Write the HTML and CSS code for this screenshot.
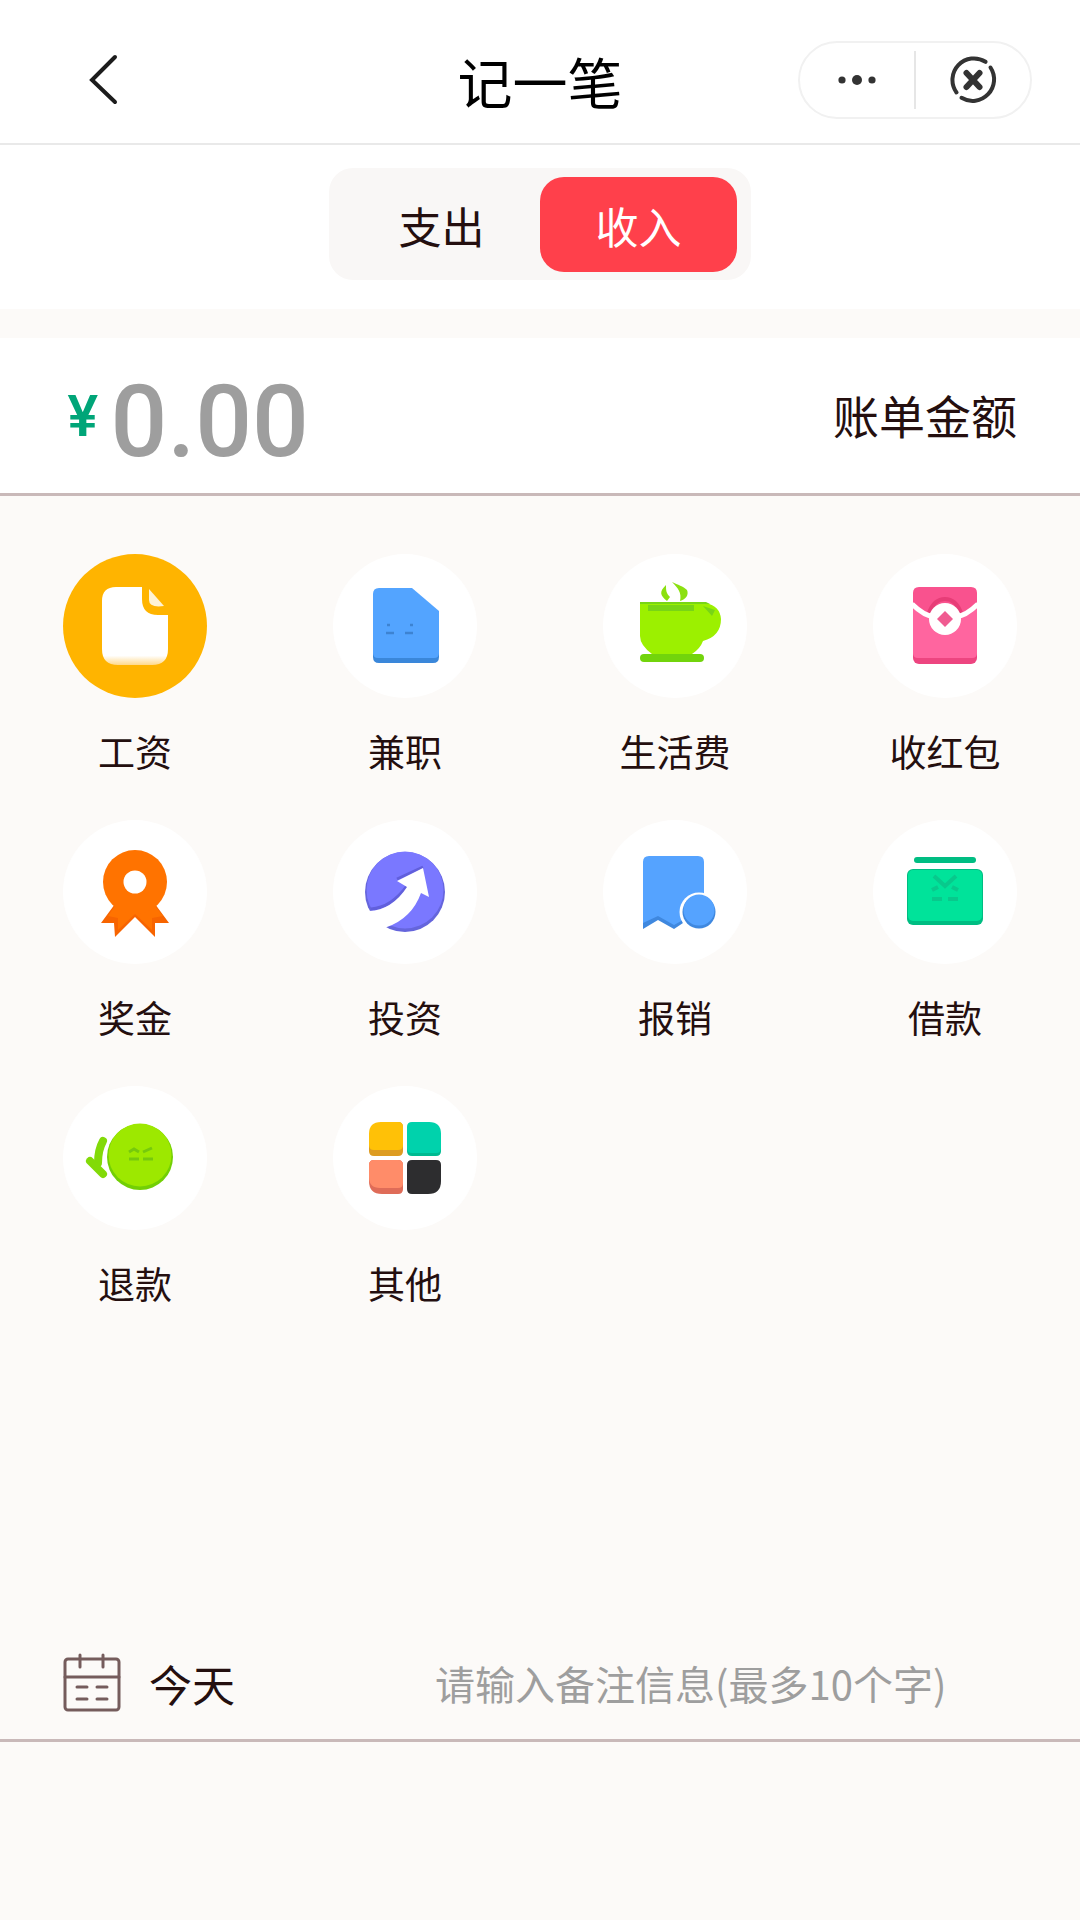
FILE: index.html
```html
<!DOCTYPE html>
<html lang="zh-CN">
<head>
<meta charset="utf-8">
<meta name="viewport" content="width=device-width, initial-scale=1">
<title>记一笔</title>
<link rel="stylesheet" href="styles.css">
</head>
<body>
<div class="page">
  <header class="navbar">
    <div class="navbar-side">
      <button class="icon-button" type="button" aria-label="返回">
        <svg width="40" height="56" viewBox="0 0 40 56" fill="none" stroke="#1c1c1c" stroke-width="4"><path d="M32 7 9 30l23 22" stroke-linecap="round"/></svg>
      </button>
    </div>
    <h1 class="navbar-title">记一笔</h1>
    <div class="navbar-side navbar-side-end">
      <div class="capsule">
        <button class="capsule-button" type="button" aria-label="更多">
          <svg width="48" height="48" viewBox="0 0 48 48" fill="#333"><circle cx="9" cy="24" r="3.600"/><circle cx="24" cy="24" r="5"/><circle cx="39" cy="24" r="3.600"/></svg>
        </button>
        <span class="capsule-divider"></span>
        <button class="capsule-button" type="button" aria-label="关闭">
          <svg width="48" height="48" viewBox="0 0 48 48" fill="none" stroke="#333" stroke-linecap="round"><g stroke-width="4"><path d="M36.500 5.800A21.500 21.500 0 0 0 7.500 36.500"/><path d="M41.500 11.500A21.500 21.500 0 0 1 12.500 41.800"/></g><path d="M17.500 17 30.500 31M30.500 17 17.500 31" stroke-width="6"/></svg>
        </button>
      </div>
    </div>
  </header>

  <main class="content">
    <div class="switch-bar">
      <div class="switch">
        <button class="switch-item" type="button" aria-pressed="false">支出</button>
        <button class="switch-item switch-item-active" type="button" aria-pressed="true">收入</button>
      </div>
    </div>

    <div class="amount">
      <span class="amount-sign">¥</span>
      <input class="amount-input" id="amount" type="text" inputmode="decimal" placeholder="0.00">
      <label class="amount-label" for="amount">账单金额</label>
    </div>

    <div class="categories">
      <button class="category" type="button" aria-pressed="true">
        <span class="category-icon category-icon-active"><svg viewBox="0 0 144 144">
          <defs><linearGradient id="paper" x1="0" y1="0" x2="0" y2="1"><stop offset=".88" stop-color="#fff"/><stop offset="1" stop-color="#ffd98a"/></linearGradient></defs>
          <path fill="url(#paper)" d="M53 33h26v12q0 16 16 16h10v34q0 16-16 16H55q-16 0-16-16V47q0-14 14-14z"/>
          <path fill="#fff3d4" d="M86 35 101 52Q86 54 86 46z"/></svg></span>
        <span class="category-name">工资</span>
      </button>
      <button class="category" type="button">
        <span class="category-icon"><svg viewBox="1 0 144 144">
          <path fill="#3a87da" d="M41 90h66v13q0 6-6 6H47q-6 0-6-6z"/>
          <path fill="#53a4ff" d="M47 34h33l27 23v42q0 5-5 5H46q-5 0-5-5V40q0-6 6-6z"/>
          <path stroke="#3d83d2" stroke-width="2.500" d="M55 71h3M78 71h3M54 79h8M73 79h8"/></svg></span>
        <span class="category-name">兼职</span>
      </button>
      <button class="category" type="button">
        <span class="category-icon"><svg viewBox="1 0 144 144">
          <path fill="#9cf000" d="M38 49h66q14 3 15 16 0 17-18 22-3 8-11 13H50Q38 91 38 82z"/>
          <path fill="#78d516" d="M46 51h46v6H46zM38 48h66l4 2H38zM101 52l12 4-3 6z"/>
          <rect x="38" y="100" width="64" height="8" rx="4" fill="#72d40c"/>
          <path fill="#8be010" d="M64 31c-7 7-6 10 1 16l3-4c-4-4-4-7-4-12zM70 28c6 3 11 4 15 8 2 5-1 9-7 11 2-8-2-13-8-19z"/></svg></span>
        <span class="category-name">生活费</span>
      </button>
      <button class="category" type="button">
        <span class="category-icon"><svg viewBox="0 0 144 144">
          <rect x="40" y="39" width="64" height="71" rx="6" fill="#ed4580"/>
          <path fill="#ff659f" d="M40 50h64v49q0 5-5 5H45q-5 0-5-5z"/>
          <path fill="#f9528e" d="M46 33h52q6 0 6 6v10Q90 65 72 67 54 65 40 49v-10q0-6 6-6z"/>
          <path fill="none" stroke="#e73d77" stroke-width="4" d="M56 59q5-14 16-14t16 14"/>
          <path fill="none" stroke="#fff" stroke-width="5" d="M39 50q12 12 23 13M105 50Q93 62 82 63"/>
          <circle cx="72" cy="65" r="16" fill="#fff"/><path fill="#f05b91" d="m72 57 8 8-8 8-8-8z"/></svg></span>
        <span class="category-name">收红包</span>
      </button>
      <button class="category" type="button">
        <span class="category-icon"><svg viewBox="0 0 144 144">
          <path fill="#f76400" d="m52 84-14 19h13l1 14 20-20 20 20v-14h14L92 84z"/>
          <path fill="#ff7300" d="M57 78 45 96l10 2v12l17-16 17 16V98l11-2-14-18z"/>
          <circle cx="72" cy="62" r="32" fill="#ff7300"/><circle cx="72" cy="62" r="11.500" fill="#fff"/></svg></span>
        <span class="category-name">奖金</span>
      </button>
      <button class="category" type="button">
        <span class="category-icon"><svg viewBox="0 0 144 144">
          <circle cx="72" cy="72" r="40" fill="#6565dc"/><circle cx="72" cy="70" r="38.500" fill="#7a78ff"/>
          <path fill="none" stroke="#615fdc" stroke-width="3" d="M90 47 64 59M74 66Q58 88 38 89"/>
          <path fill="#fff" d="m90 48-26 13 10 6Q59 90 36 91l-8 20 26-4q25-9 34-34l8 4z"/></svg></span>
        <span class="category-name">投资</span>
      </button>
      <button class="category" type="button">
        <span class="category-icon"><svg viewBox="0 0 144 144">
          <path fill="#3f88df" d="M40 90h61v13H80l-9 6-16-9-15 9z"/>
          <path fill="#55a3ff" d="M46 36h49q6 0 6 6v58H80l-9 5-16-9-15 7V42q0-6 6-6z"/>
          <circle cx="96" cy="92" r="19.500" fill="#fff"/><circle cx="96" cy="92" r="16.500" fill="#3f88df"/><circle cx="96" cy="90" r="15.500" fill="#55a3ff"/></svg></span>
        <span class="category-name">报销</span>
      </button>
      <button class="category" type="button">
        <span class="category-icon"><svg viewBox="0 0 144 144">
          <rect x="41" y="37" width="62" height="6" rx="3" fill="#00bd82"/>
          <rect x="34" y="49" width="76" height="56" rx="6" fill="#00bd82"/>
          <rect x="35" y="50" width="74" height="51" rx="5" fill="#00e39a"/>
          <path fill="none" stroke="#08c98c" stroke-width="4" d="m61 56 11 10 11-10M59 70l6-3M85 70l-6-3M59 79h10M75 79h10"/></svg></span>
        <span class="category-name">借款</span>
      </button>
      <button class="category" type="button">
        <span class="category-icon"><svg viewBox="0 0 144 144">
          <circle cx="77" cy="71" r="33" fill="#72cf05"/><circle cx="77" cy="69" r="31.500" fill="#9de800"/>
          <g fill="none" stroke="#82da08" stroke-width="8" stroke-linecap="round"><path d="M40 55q-5 9-5 22"/><path d="m27 75 13 13"/></g>
          <path fill="none" stroke="#76c90c" stroke-width="3" d="m66 66 5-3 5 3M80 66l9-4M66 73h10M80 73h10"/></svg></span>
        <span class="category-name">退款</span>
      </button>
      <button class="category" type="button">
        <span class="category-icon"><svg viewBox="0 0 144 144">
          <path fill="#dd9c22" d="M48 36h17q5 0 5 5v24q0 5-5 5H41q-5 0-5-5V48z"/><path fill="#ffc107" d="M48 36h17q5 0 5 5v18q0 5-5 5H41q-5 0-5-5V48q0-12 12-12z"/>
          <path fill="#00ba91" d="M96 36l12 12v17q0 5-5 5H79q-5 0-5-5V41z"/><path fill="#00d2ac" d="M79 36h17q12 0 12 12v14q0 5-5 5H79q-5 0-5-5V41q0-5 5-5z"/>
          <path fill="#df6c58" d="M41 74h24q5 0 5 5v24q0 5-5 5H49q-13 0-13-13V79q0-5 5-5z"/><path fill="#ff8c69" d="M41 74h24q5 0 5 5v18q0 5-5 5H47q-11 0-11-11V79q0-5 5-5z"/>
          <path fill="#2d2d2f" d="M79 74h24q5 0 5 5v16q0 13-13 13H79q-5 0-5-5V79q0-5 5-5z"/></svg></span>
        <span class="category-name">其他</span>
      </button>
    </div>

    <div class="note">
      <button class="date-button" type="button">
        <svg width="58" height="60" viewBox="0 0 58 60" fill="none" stroke="#755c5c" stroke-width="3"><rect x="2" y="6" width="54" height="51" rx="3"/><path d="M2 24h54M17 2v12M40 2v12M14 34h10M34 34h10M14 46h10M34 46h10" stroke-linecap="round"/></svg>
        <span>今天</span>
      </button>
      <input class="note-input" type="text" maxlength="10" aria-label="备注信息" placeholder="请输入备注信息(最多10个字)">
    </div>
  </main>
</div>
</body>
</html>
```
FILE: styles.css
```css
* {
  box-sizing: border-box;
}

body {
  margin: 0;
  background: #fcfaf8;
  color: #240f0f;
  font-family: "Noto Sans CJK SC", "Noto Sans", sans-serif;
}

button,
input {
  margin: 0;
  padding: 0;
  border: 0;
  background: none;
  color: inherit;
  font: inherit;
}

svg {
  display: block;
}

.page {
  min-height: 100vh;
  display: flex;
  flex-direction: column;
}

.navbar {
  display: flex;
  align-items: center;
  padding: 40px 48px 23px 83px;
  border-bottom: 2px solid #e9e9e9;
  background: #fff;
}

.navbar-side {
  flex: 1 0 0;
}

.navbar-side:first-child {
  margin-right: -35px;
}

.navbar-side-end {
  display: flex;
  justify-content: flex-end;
}

.navbar-title {
  margin: 0;
  color: #000;
  font-size: 55px;
  font-weight: 400;
  line-height: 80px;
}

.capsule {
  display: flex;
  align-items: center;
  width: 234px;
  height: 78px;
  border: 2px solid #f1f1f1;
  border-radius: 39px;
}

.capsule-button {
  flex: 1;
  display: flex;
  justify-content: center;
}

.capsule-divider {
  width: 2px;
  height: 58px;
  background: #e6e6e6;
}

.content {
  flex: 1;
  display: flex;
  flex-direction: column;
}

.switch-bar {
  display: flex;
  justify-content: center;
  padding: 23px 0 29px;
  background: #fff;
}

.switch {
  display: flex;
  padding: 9px 14px 8px;
  border-radius: 24px;
  background: #f9f7f6;
}

.switch-item {
  width: 197px;
  height: 95px;
  border-radius: 24px;
  font-size: 43px;
  line-height: 60px;
}

.switch-item-active {
  background: #ff404b;
  color: #fff;
}

.amount {
  display: flex;
  align-items: center;
  gap: 12px;
  margin-top: 29px;
  padding: 23px 63px 22px 67px;
  border-bottom: 3px solid #c9b9b9;
  background: #fff;
}

.amount-sign {
  color: #00a578;
  font-family: Inter, sans-serif;
  font-size: 56px;
  font-weight: 600;
  line-height: 80px;
}

.amount-input {
  flex: 1;
  min-width: 0;
  height: 110px;
  padding-top: 10px;
  font-family: Roboto, sans-serif;
  font-size: 100px;
  font-weight: 500;
}

.amount-input::placeholder,
.note-input::placeholder {
  color: #9e9e9e;
  opacity: 1;
}

.amount-label {
  padding-bottom: 4px;
  font-size: 46px;
  line-height: 64px;
}

.categories {
  display: grid;
  grid-template-columns: repeat(4, 1fr);
  row-gap: 47px;
  padding: 58px 0;
}

.category {
  display: flex;
  flex-direction: column;
  align-items: center;
  gap: 31px;
}

.category-icon {
  width: 144px;
  height: 144px;
  border-radius: 50%;
  background: #fff;
}

.category-icon-active {
  background: #ffb400;
}

.category-name {
  font-size: 37px;
  line-height: 44px;
}

.note {
  display: flex;
  align-items: center;
  margin: auto 0 178px;
  padding: 0 63px 24px;
  border-bottom: 3px solid #c9b9b9;
}

.date-button {
  flex: 0 0 39%;
  display: flex;
  align-items: center;
  gap: 28px;
  font-size: 43px;
  line-height: 64px;
}

.note-input {
  flex: 1;
  min-width: 0;
  height: 64px;
  font-size: 40px;
}
```
